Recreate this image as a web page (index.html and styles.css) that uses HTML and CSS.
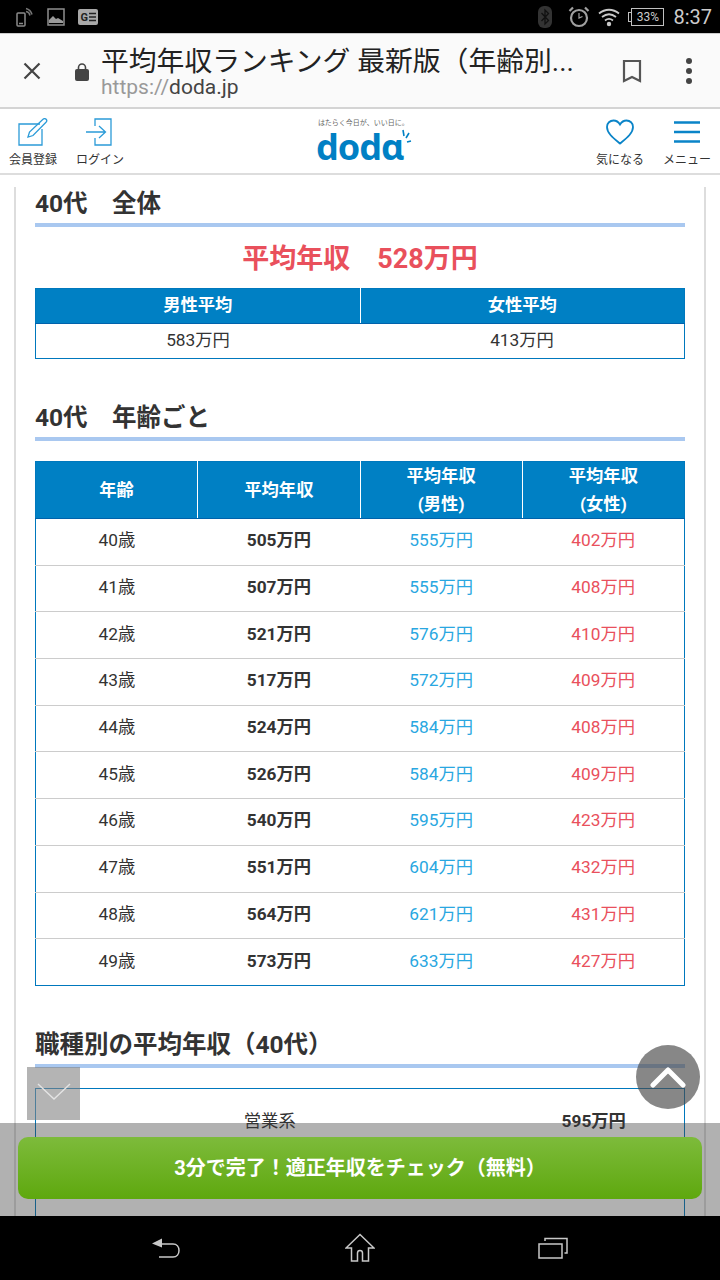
FILE: index.html
```html
<!DOCTYPE html>
<html lang="ja">
<head>
  <meta charset="UTF-8" />
  <meta name="viewport" content="width=device-width, initial-scale=1.0"/>
  <title>平均年収ランキング</title>
  <link rel="stylesheet" href="styles.css">
</head>
<body>
  <div class="status-bar">
    <div class="status-left">
      <svg class="cast-icon" width="22" height="20" viewBox="0 0 22 20" fill="none" stroke="#8a8a8a" stroke-width="1.500"><rect x="1" y="6" width="8" height="13" rx="1"/><path d="M3 16.500h4" /><path d="M10 4.500a5 5 0 0 1 4 4M10 1.500a8.500 8.500 0 0 1 6 6" stroke="#777"/></svg>
      <svg width="18" height="18" viewBox="0 0 18 18"><rect x="1" y="1" width="16" height="16" fill="none" stroke="#8f8f8f" stroke-width="1.500"/><path d="M2 15v-3l4-4 3 3 2-1 5 3v2z" fill="#9a9a9a"/></svg>
      <svg class="news-icon" width="20" height="16" viewBox="0 0 20 16"><rect width="20" height="16" rx="2" fill="#a8a8a8"/><text x="2.500" y="12" class="g-mark">G</text><path d="M11 4.500h7M11 8h7M11 11.500h7" stroke="#222" stroke-width="1.500"/></svg>
    </div>
    <div class="status-right">
      <svg class="bt-icon" width="14" height="22" viewBox="0 0 14 22"><rect width="14" height="22" rx="6" fill="#333"/><path d="M3.500 7l7 7.500L7 18V4l3.500 3.500L3.500 15" fill="none" stroke="#111" stroke-width="1.300"/></svg>
      <svg class="alarm" width="22" height="22" viewBox="0 0 22 22" fill="none" stroke="#a0a0a0"><circle cx="11" cy="12" r="8" stroke-width="2.200"/><path d="M11 7v5l3.500-1.500" stroke-width="1.200"/><path d="M1.500 5L5 1.500M20.500 5L17 1.500" stroke-width="2.200"/></svg>
      <svg class="wifi" width="22" height="20" viewBox="0 0 22 20" fill="none" stroke="#c8c8c8" stroke-width="1.800"><path d="M1 6.500c6-5 14-5 20 0M4 10c4.500-3.500 9.500-3.500 14 0M7 13.500c2.500-2 5.500-2 8 0"/><circle cx="11" cy="17" r="2.200" fill="#c8c8c8" stroke="none"/></svg>
      <div class="battery"><span class="battery-cap"></span><span class="battery-body">33%</span></div>
      <span class="clock">8:37</span>
    </div>
  </div>

  <div class="toolbar">
    <svg class="close-icon" width="20" height="20" viewBox="0 0 20 20"><path d="M2.500 2.500l15 15M17.500 2.500l-15 15" stroke="#444" stroke-width="2.200"/></svg>
    <svg class="lock-icon" width="14" height="18" viewBox="0 0 14 18"><path d="M3.500 7V4.500a3.500 3.500 0 0 1 7 0V7" fill="none" stroke="#444" stroke-width="1.600"/><rect y="6" width="14" height="12" rx="2" fill="#444"/></svg>
    <div class="toolbar-text">
      <div class="page-title">平均年収ランキング 最新版（年齢別...</div>
      <div class="page-url"><span class="url-scheme">https://</span>doda.jp</div>
    </div>
    <svg class="bookmark-icon" width="20" height="24" viewBox="0 0 20 24"><path d="M2 2h16v20l-8-4-8 4z" fill="none" stroke="#555" stroke-width="2.200"/></svg>
    <div class="more-icon"><span></span><span></span><span></span></div>
  </div>

  <header class="site-header">
    <div class="header-group">
      <a class="header-link">
        <svg width="30" height="28" viewBox="0 0 30 28" fill="none" stroke="#2b9bd8" stroke-width="1.300"><path d="M22 6H1v21h23V11"/><path d="M10 19l1.500-5L25 1.200c1-.8 2.500-.8 3.300.3s.6 2-.3 2.800L15 17.500z"/></svg>
        <span>会員登録</span>
      </a>
      <a class="header-link">
        <svg width="30" height="28" viewBox="0 0 30 28" fill="none" stroke="#2b9bd8" stroke-width="1.300"><path d="M10 8V1h16v26H10v-7"/><path d="M1 14h19M14 8l6.500 6-6.500 6"/></svg>
        <span>ログイン</span>
      </a>
    </div>
    <div class="logo">
      <div class="logo-tag">はたらく今日が、いい日に。</div>
      <div class="logo-word">dodɑ<svg class="logo-spark" width="12" height="16" viewBox="0 0 12 16"><path d="M3 2l1 6M9 5l-3 5M11 13l-4 1" stroke="#0080c4" stroke-width="1.600" fill="none"/></svg></div>
    </div>
    <div class="header-group">
      <a class="header-link">
        <svg width="30" height="28" viewBox="0 0 30 28"><path d="M15 25.500C9 20.500 2 15.500 2 9c0-4 3-6.500 6.500-6.500 3 0 5 1.500 6.500 4 1.500-2.500 3.500-4 6.500-4C25 2.500 28 5 28 9c0 6.500-7 11.500-13 16.500z" fill="none" stroke="#0a84c8" stroke-width="1.800"/></svg>
        <span>気になる</span>
      </a>
      <a class="header-link">
        <svg width="30" height="28" viewBox="0 0 30 28"><path d="M2 4.500h26M2 14h26M2 23.500h26" stroke="#0a84c8" stroke-width="2.400"/></svg>
        <span>メニュー</span>
      </a>
    </div>
  </header>

  <main class="viewport">
    <div class="content">
      <h2 class="section-title first">40代　全体</h2>
      <p class="average">平均年収　528万円</p>
      <table class="data-table summary">
        <tr><th>男性平均</th><th>女性平均</th></tr>
        <tr><td>583万円</td><td>413万円</td></tr>
      </table>

      <h2 class="section-title">40代　年齢ごと</h2>
      <table class="data-table ages">
        <tr><th>年齢</th><th>平均年収</th><th>平均年収<br>(男性)</th><th>平均年収<br>(女性)</th></tr>
        <tr><td>40歳</td><td class="all">505万円</td><td class="male">555万円</td><td class="female">402万円</td></tr>
        <tr><td>41歳</td><td class="all">507万円</td><td class="male">555万円</td><td class="female">408万円</td></tr>
        <tr><td>42歳</td><td class="all">521万円</td><td class="male">576万円</td><td class="female">410万円</td></tr>
        <tr><td>43歳</td><td class="all">517万円</td><td class="male">572万円</td><td class="female">409万円</td></tr>
        <tr><td>44歳</td><td class="all">524万円</td><td class="male">584万円</td><td class="female">408万円</td></tr>
        <tr><td>45歳</td><td class="all">526万円</td><td class="male">584万円</td><td class="female">409万円</td></tr>
        <tr><td>46歳</td><td class="all">540万円</td><td class="male">595万円</td><td class="female">423万円</td></tr>
        <tr><td>47歳</td><td class="all">551万円</td><td class="male">604万円</td><td class="female">432万円</td></tr>
        <tr><td>48歳</td><td class="all">564万円</td><td class="male">621万円</td><td class="female">431万円</td></tr>
        <tr><td>49歳</td><td class="all">573万円</td><td class="male">633万円</td><td class="female">427万円</td></tr>
      </table>

      <h2 class="section-title">職種別の平均年収（40代）</h2>
      <table class="data-table jobs">
        <tr><td class="job-name">営業系</td><td class="all">595万円</td></tr>
      </table>
    </div>

    <div class="collapse-box">
      <svg width="34" height="20" viewBox="0 0 34 20"><path d="M1 2l16 15L33 2" fill="none" stroke="#e4e4e4" stroke-width="1.400"/></svg>
    </div>
    <div class="to-top">
      <svg width="36" height="24" viewBox="0 0 36 24"><path d="M3 20L18 5l15 15" fill="none" stroke="#fff" stroke-width="5" stroke-linecap="round" stroke-linejoin="round"/></svg>
    </div>
    <div class="cta-bar">
      <a class="cta-button">3分で完了！適正年収をチェック（無料）</a>
    </div>
  </main>

  <nav class="nav-bar">
    <svg width="30" height="24" viewBox="0 0 30 24" fill="none" stroke="#c8c8c8" stroke-width="1.500"><path d="M6 8h16c8 0 8 13 0 13H8"/><path d="M1 7.500L11 2.500v9z" fill="#c8c8c8" stroke="none"/></svg>
    <svg width="30" height="30" viewBox="0 0 30 30" fill="none" stroke="#c8c8c8" stroke-width="1.500"><path d="M15 1.500L1 15h5.500v13h6V20c0-3.500 5-3.500 5 0v8h6V15H29z"/></svg>
    <svg width="30" height="22" viewBox="0 0 30 22" fill="none" stroke="#c8c8c8" stroke-width="1.500"><rect x="1" y="7" width="23" height="14"/><path d="M7 4V1.500h22V16h-2.500"/></svg>
  </nav>
</body>
</html>
```

FILE: styles.css
```css
* {
  margin: 0;
  padding: 0;
  box-sizing: border-box;
}

body {
  width: 720px;
  height: 1280px;
  display: flex;
  flex-direction: column;
  overflow: hidden;
  font-family: Roboto, "Noto Sans CJK JP", sans-serif;
  color: #333;
  background: #fff;
}

.status-bar {
  height: 33px;
  flex: none;
  background: #000;
  display: flex;
  justify-content: space-between;
  align-items: center;
  padding: 0 8px 0 16px;
}

.status-left,
.status-right {
  display: flex;
  align-items: center;
}

.status-left { gap: 9px; }
.status-right { gap: 8px; }

.news-icon { margin-left: 4px; }
.bt-icon { margin-right: 8px; }

.g-mark {
  font: bold 11px Roboto, sans-serif;
  fill: #222;
}

.battery {
  display: flex;
  align-items: center;
}

.battery-cap {
  width: 3px;
  height: 10px;
  border: 1px solid #c0c0c0;
  border-right: none;
}

.battery-body {
  width: 33px;
  height: 18px;
  border: 1px solid #c0c0c0;
  color: #ccc;
  font-size: 12px;
  line-height: 16px;
  text-align: center;
}

.clock {
  color: #ccc;
  font-size: 20px;
  margin-left: 1px;
}

.toolbar {
  height: 76px;
  flex: none;
  display: flex;
  align-items: center;
  background: #fafafa;
  border-top: 1px solid #ccc;
  border-bottom: 2px solid #d4d4d4;
  padding-left: 22px;
}

.lock-icon {
  margin: 2px 0 0 33px;
}

.toolbar-text {
  width: 490px;
  margin-left: 12px;
  padding-top: 3px;
  white-space: nowrap;
}

.page-title {
  font-size: 27.800px;
  line-height: 29px;
  color: #222;
}

.page-url {
  font-size: 21px;
  line-height: 22px;
  color: #444;
}

.url-scheme {
  color: #999;
}

.bookmark-icon {
  margin-left: 31px;
}

.more-icon {
  display: flex;
  flex-direction: column;
  gap: 4px;
  margin-left: 44px;
}

.more-icon span {
  width: 6px;
  height: 6px;
  border-radius: 50%;
  background: #444;
}

.site-header {
  height: 66px;
  flex: none;
  display: flex;
  justify-content: space-between;
  border-bottom: 2px solid #ddd;
  padding: 9px 9px 0 9px;
}

.header-group {
  display: flex;
  gap: 19px;
}

.header-link {
  width: 48px;
  display: flex;
  flex-direction: column;
  align-items: center;
  gap: 6px;
  font-size: 12px;
  line-height: 17px;
  white-space: nowrap;
  color: #333;
}

.logo {
  margin-left: 6px;
  width: 90px;
  text-align: center;
}

.logo-tag {
  font-size: 7px;
  line-height: 10px;
  color: #666;
  white-space: nowrap;
}

.logo-word {
  font-family: "Noto Sans", sans-serif;
  font-weight: 700;
  font-size: 36px;
  line-height: 38px;
  letter-spacing: -1px;
  margin-left: -2px;
  color: #0080c4;
  position: relative;
  white-space: nowrap;
  text-align: left;
}

.logo-spark {
  position: absolute;
  left: 84px;
  top: 0;
}

.viewport {
  flex: 1;
  position: relative;
  overflow: hidden;
}

.content {
  margin: 0 14px;
  height: 100%;
  padding: 0 19px;
  border-left: 2px solid #ddd;
  border-right: 2px solid #ddd;
}

.section-title {
  font-size: 24.500px;
  line-height: 33px;
  font-weight: bold;
  color: #333;
  border-bottom: 4px solid #a9c8f0;
  padding-bottom: 3px;
  margin-top: 42px;
  margin-bottom: 20px;
}

.section-title.first {
  margin-top: 12px;
  margin-bottom: 0;
}

.average {
  font-size: 27px;
  line-height: 36px;
  font-weight: bold;
  color: #e9505c;
  text-align: center;
  margin: 14px 0 11px;
}

.data-table {
  width: 100%;
  border-collapse: collapse;
  table-layout: fixed;
  border: 1px solid #0078bd;
  font-size: 17.300px;
}

.data-table th {
  background: #0080c4;
  color: #fff;
  font-weight: bold;
  border-left: 1px solid #fff;
  border-bottom: 1px solid #0062ab;
  line-height: 28px;
}

.data-table th:first-child {
  border-left: none;
}

.data-table td {
  text-align: center;
  color: #333;
  border-top: 1px solid #ccc;
  padding-bottom: 6px;
}

.summary th { height: 35px; padding-bottom: 2px; }
.summary td { height: 35px; }

.ages th { height: 57px; }
.ages td { height: 46.700px; }

.data-table td.all {
  font-weight: bold;
}

.data-table td.male { color: #29a7e1; }
.data-table td.female { color: #e9505c; }

.jobs td {
  height: 140px;
  border-top: none;
  vertical-align: top;
  padding-top: 18px;
}

.jobs td.job-name { width: 468px; }

.collapse-box {
  position: absolute;
  left: 27px;
  top: 892px;
  width: 53px;
  height: 53px;
  background: rgba(130, 130, 130, 0.6);
  display: flex;
  align-items: center;
  justify-content: center;
  padding-bottom: 4px;
}

.to-top {
  position: absolute;
  left: 636px;
  top: 870px;
  width: 64px;
  height: 64px;
  border-radius: 50%;
  background: rgba(70, 70, 70, 0.65);
  display: flex;
  align-items: center;
  justify-content: center;
}

.cta-bar {
  position: absolute;
  left: 0;
  right: 0;
  bottom: 0;
  height: 93px;
  padding: 14px 18px 0;
  background: rgba(60, 60, 60, 0.4);
}

.cta-button {
  display: block;
  height: 62px;
  border-radius: 10px;
  background: linear-gradient(#7dbb3b, #5ea80e);
  color: #fff;
  font-size: 20px;
  font-weight: bold;
  line-height: 62px;
  text-align: center;
}

.nav-bar {
  height: 64px;
  flex: none;
  background: #000;
  display: flex;
  justify-content: space-between;
  align-items: center;
  padding: 0 152px 0 151px;
}
```
